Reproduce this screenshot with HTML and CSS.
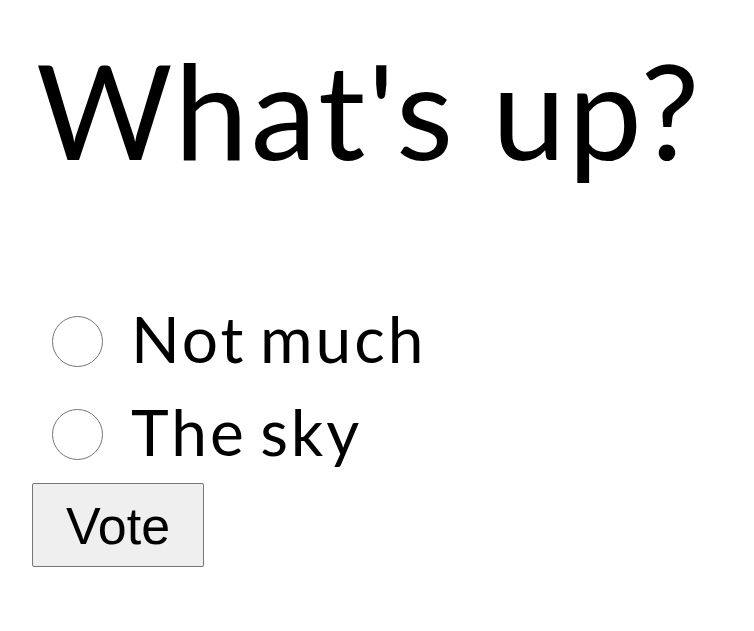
FILE: index.html
```html
<!DOCTYPE html>
<html lang="en">
<head>
  <meta charset="UTF-8">
  <title>Poll</title>
  <link rel="stylesheet" href="styles.css">
</head>
<body>

<h1 class="question">What's up?</h1>

<form class="poll" action="#" method="post">
  <label class="choice">
    <input type="radio" name="choice" value="1">
    <span>Not much</span>
  </label>
  <label class="choice">
    <input type="radio" name="choice" value="2">
    <span>The sky</span>
  </label>
  <button class="vote" type="submit">Vote</button>
</form>

</body>
</html>
```
FILE: styles.css
```css
body {
  margin: 0;
  padding: 0 32px;
  background: #fff;
  color: #000;
  font-family: Lato, "Open Sans", sans-serif;
}

.question {
  margin: 43px 0 0 4px;
  font-size: 132px;
  font-weight: normal;
  line-height: 132px;
  letter-spacing: 2.5px;
  white-space: nowrap;
}

.poll {
  margin-top: 117px;
}

.choice {
  display: flex;
  align-items: flex-start;
  gap: 28px;
  height: 93px;
  padding-left: 20px;
  font-size: 64px;
  line-height: 93px;
  letter-spacing: 3px;
  word-spacing: -6px;
}

.choice input {
  appearance: none;
  width: 51px;
  height: 51px;
  margin: 24px 0 0;
  border: 1px solid #767676;
  border-radius: 50%;
  background: #fff;
  flex-shrink: 0;
}

.vote {
  display: block;
  margin-top: 5px;
  padding: 13px 33px 11px;
  font-family: "Liberation Sans", Arial, sans-serif;
  font-size: 52px;
  line-height: 58px;
  color: #000;
  background: #efefef;
  border: 1px solid #767676;
  border-radius: 2px;
}
```
